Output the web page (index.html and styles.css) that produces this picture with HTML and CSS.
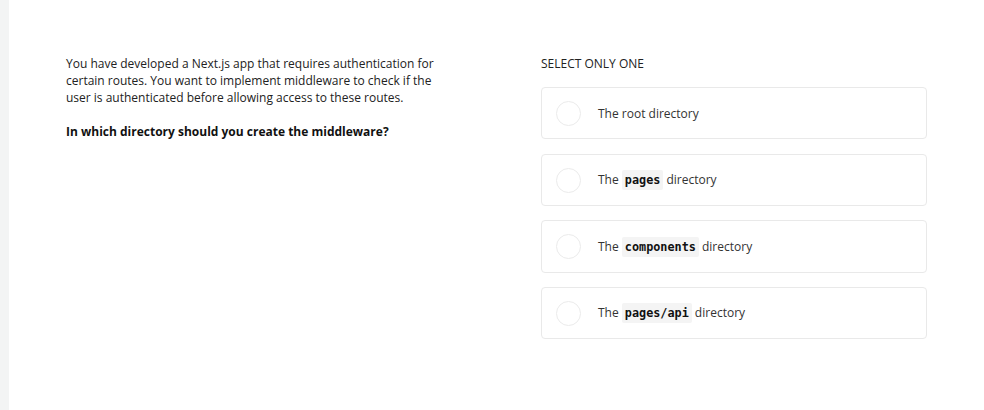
FILE: index.html
```html
<!DOCTYPE html>
<html lang="en">
<head>
<meta charset="utf-8">
<title>Quiz</title>
<link rel="stylesheet" href="styles.css">
</head>
<body>
<main class="panel">
  <section class="question">
    <p class="prompt">You have developed a Next.js app that requires authentication for certain routes. You want to implement middleware to check if the user is authenticated before allowing access to these routes.</p>
    <p class="ask">In which directory should you create the middleware?</p>
  </section>
  <section class="answers">
    <div class="label">SELECT ONLY ONE</div>
    <ul class="options">
      <li class="option"><span class="radio"></span><span class="text">The root directory</span></li>
      <li class="option"><span class="radio"></span><span class="text">The <code>pages</code> directory</span></li>
      <li class="option"><span class="radio"></span><span class="text">The <code>components</code> directory</span></li>
      <li class="option"><span class="radio"></span><span class="text">The <code>pages/api</code> directory</span></li>
    </ul>
  </section>
</main>
</body>
</html>
```
FILE: styles.css
```css
html, body {
  margin: 0;
  height: 100%;
}
body {
  background: #f3f4f4;
  font-family: "Open Sans", "Liberation Sans", sans-serif;
  font-size: 12px;
  line-height: 17px;
  color: #222;
  padding-left: 9px;
  box-sizing: border-box;
}
.panel {
  background: #fff;
  height: 100%;
  box-sizing: border-box;
  padding: 55px 57px 0 57px;
  display: grid;
  grid-template-columns: 386px 386px;
  justify-content: space-between;
  align-content: start;
}
.question p {
  margin: 0;
}
.prompt {
  width: 375px;
}
.ask {
  margin-top: 17px !important;
  font-weight: 700;
  color: #111;
}
.label {
  color: #222;
}
.options {
  list-style: none;
  margin: 15px 0 0;
  padding: 0;
  display: flex;
  flex-direction: column;
  gap: 15px;
}
.option {
  display: flex;
  align-items: center;
  height: 52px;
  box-sizing: border-box;
  border: 1px solid #e9e9e9;
  border-radius: 4px;
  padding-left: 14px;
}
.option:nth-child(3) { margin-top: -1px; height: 53px; }
.option:nth-child(4) { margin-top: -1px; }
.radio {
  width: 23px;
  height: 23px;
  border: 1px solid #ebebeb;
  border-radius: 50%;
  flex: none;
}
.text {
  margin-left: 17px;
  color: #333;
}
code {
  font-family: "DejaVu Sans Mono", "Liberation Mono", monospace;
  font-weight: 700;
  font-size: 11.8px;
  color: #111;
  background: #f4f4f4;
  border-radius: 2px;
  padding: 3px 3px;
}
```
